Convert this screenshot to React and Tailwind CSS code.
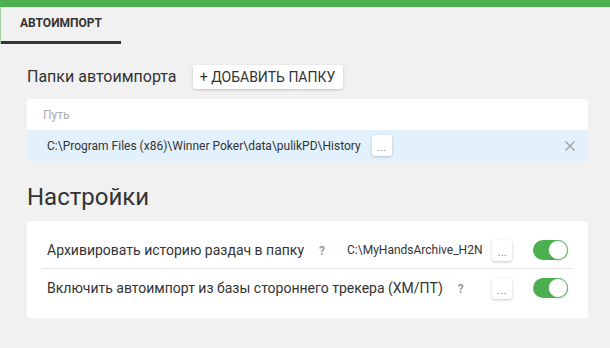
import React from "react";

function Dots() {
  return (
    <div className="w-[20px] h-[21px] bg-white rounded-[3px] shadow-[0_1px_3px_rgba(0,0,0,0.22)] flex items-end justify-center pb-[3px] text-[10px] leading-[10px] text-[#777] tracking-[0.5px]">
      ...
    </div>
  );
}

function Toggle() {
  return (
    <div className="relative w-[35px] h-[20px] rounded-full bg-[#4caf50]">
      <div className="absolute right-0 top-0 w-[20px] h-[20px] rounded-full bg-white border border-[#6dbb70] shadow-[0_1px_2px_rgba(0,0,0,0.15)]" />
    </div>
  );
}

function Q() {
  return <span className="text-[12px] font-bold text-[#9a9a9a]">?</span>;
}

export default function App() {
  return (
    <div className="w-[610px] h-[348px] bg-[#f1f1f1] text-[#333] overflow-hidden" style={{ fontFamily: "Roboto, 'Liberation Sans', sans-serif" }}>
      <div className="h-[7px] bg-[#4caf50]" />
      <div className="flex">
        <div className="border-l border-[#9fd3a1] h-[37px] flex">
          <div className="w-[120px] h-[37px] border-b-[3px] border-[#333] flex items-center justify-center pb-[3px]">
            <span className="text-[12px] font-bold text-[#333]">АВТОИМПОРТ</span>
          </div>
        </div>
      </div>

      <div className="px-[27px] pr-[22px]">
        <div className="mt-[21px] h-[24px] flex items-center gap-[16px]">
          <span className="text-[16px] text-[#333]">Папки автоимпорта</span>
          <div className="h-[24px] w-[150px] bg-white rounded-[3px] shadow-[0_1px_3px_rgba(0,0,0,0.2)] flex items-center justify-center text-[14px] text-[#333]">
            + ДОБАВИТЬ ПАПКУ
          </div>
        </div>

        <div className="mt-[10px] w-[561px] bg-white rounded-[3px] overflow-hidden">
          <div className="h-[31px] flex items-center pl-[16px] text-[12px] text-[#aaa]">Путь</div>
          <div className="h-[31px] bg-[#e3f1fc] flex items-center pl-[20px] pr-[13px]">
            <span className="text-[12px] text-[#333]">C:\Program Files (x86)\Winner Poker\data\pulikPD\History</span>
            <div className="ml-[11px]"><Dots /></div>
            <div className="flex-1" />
            <svg width="10" height="10" viewBox="0 0 10 10" className="text-[#9e9e9e]">
              <path d="M0.5 0.5 L9.5 9.5 M9.5 0.5 L0.5 9.5" stroke="currentColor" strokeWidth="1.2" />
            </svg>
          </div>
        </div>

        <div className="mt-[20px] text-[24px] leading-[32px] text-[#333]">Настройки</div>

        <div className="mt-[8px] w-[561px] bg-white rounded-[4px] px-[15px] py-[11px]">
          <div className="h-[37px] flex items-center pl-[5px] pr-[5px] border-b border-[#e6e6e6]">
            <span className="text-[14px] text-[#333]">Архивировать историю раздач в папку</span>
            <span className="ml-[15px]"><Q /></span>
            <span className="ml-[22px] text-[12px] text-[#333]">C:\MyHandsArchive_H2N</span>
            <div className="ml-[10px]"><Dots /></div>
            <div className="flex-1" />
            <Toggle />
          </div>
          <div className="h-[38px] flex items-center pl-[5px] pr-[5px]">
            <span className="text-[14px] text-[#333]">Включить автоимпорт из базы стороннего трекера (ХМ/ПТ)</span>
            <span className="ml-[15px]"><Q /></span>
            <div className="flex-1" />
            <div className="mr-[21px]"><Dots /></div>
            <Toggle />
          </div>
        </div>
      </div>
    </div>
  );
}
